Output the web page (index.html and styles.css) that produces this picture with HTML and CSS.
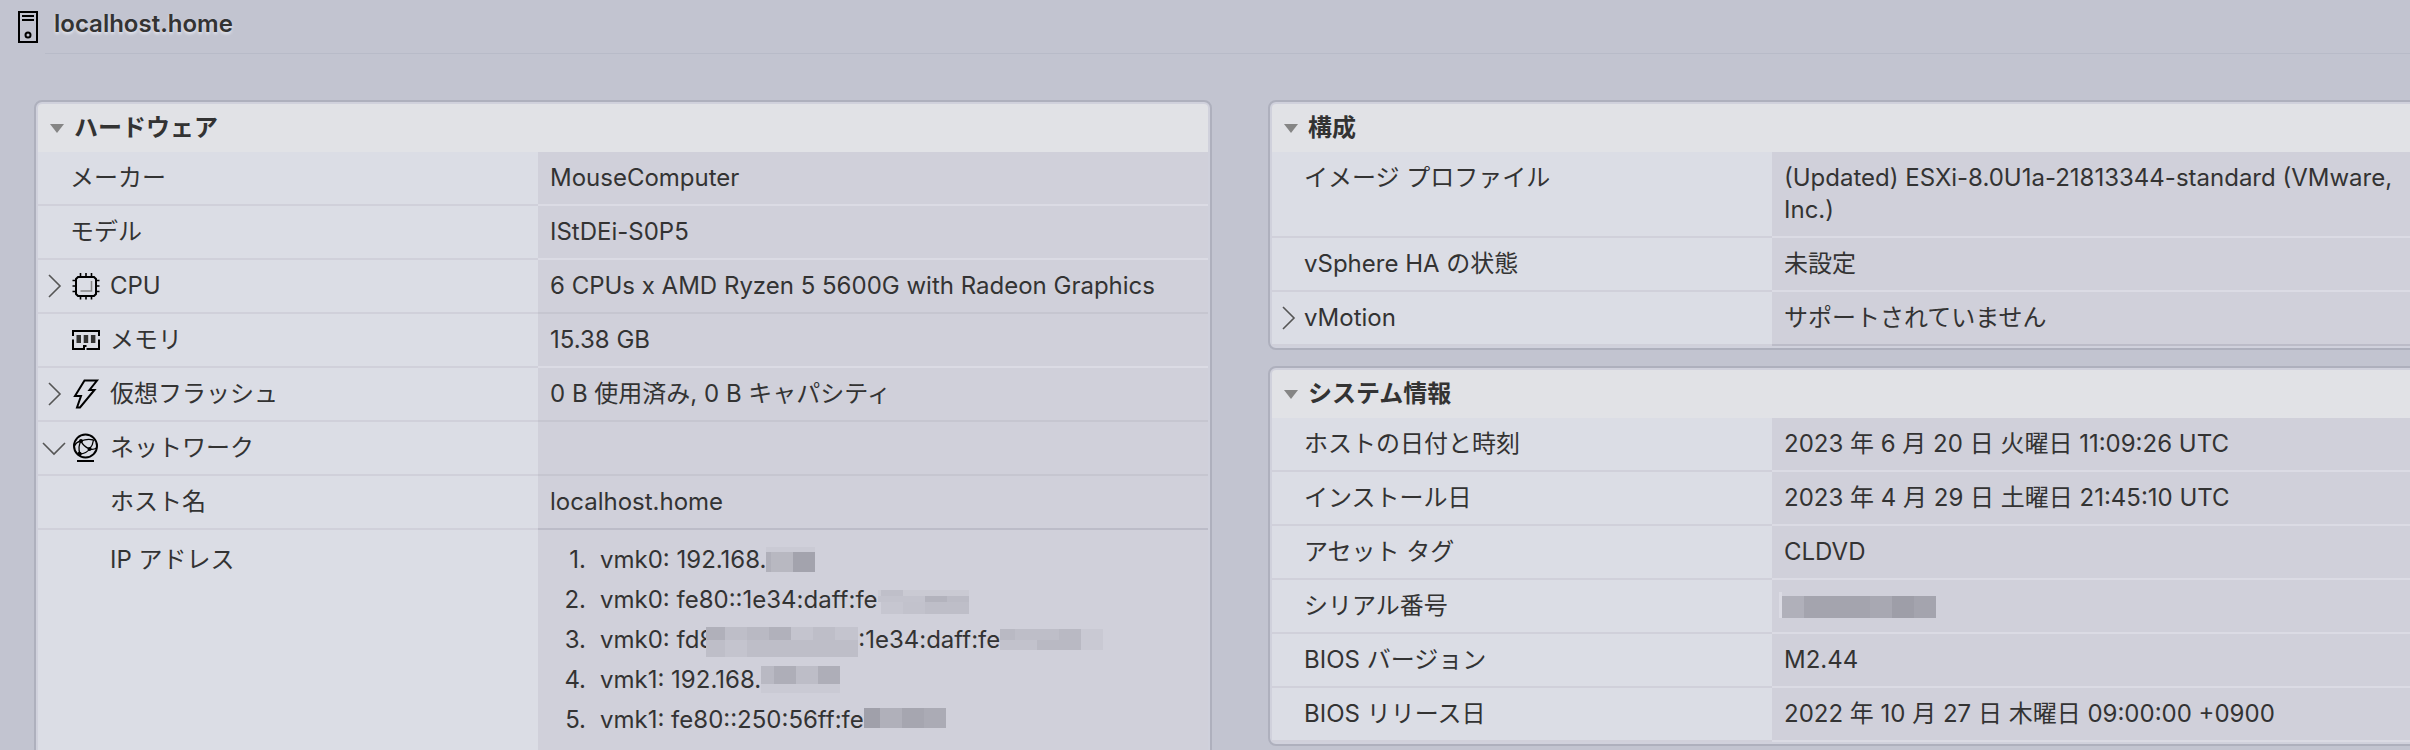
FILE: index.html
```html
<!DOCTYPE html>
<html lang="ja">
<head>
<meta charset="utf-8">
<title>localhost.home</title>
<link rel="stylesheet" href="styles.css">
</head>
<body>
<div class="app">
  <header class="host-bar">
    <svg class="host-icon" width="20" height="32" viewBox="0 0 20 32" fill="none" stroke="#000" stroke-width="2"><path d="M1 1h18v30H1z"/><path d="M4 5h12M4 9h12"/><circle cx="10" cy="24" r="2.5"/></svg>
    <h1 class="host-name">localhost.home</h1>
  </header>

  <main class="columns">
    <div class="column">
      <section class="panel">
        <button class="panel-title" type="button" aria-expanded="true"><span class="caret"></span>ハードウェア</button>
        <table class="props">
          <tr><th scope="row"><div class="label"><span class="twisty"></span>メーカー</div></th><td>MouseComputer</td></tr>
          <tr><th scope="row"><div class="label"><span class="twisty"></span>モデル</div></th><td>IStDEi-S0P5</td></tr>
          <tr class="mid"><th scope="row"><div class="label">
            <button class="twisty" type="button" aria-label="CPU を展開"><svg class="chevron" viewBox="0 0 32 32"><path d="M11 5l11 11-11 11"/></svg></button>
            <svg class="icon" viewBox="0 0 32 32"><path d="M8 7h16l2 2v15l-2 2H8l-2-2V9z"/><path class="pins" d="M10.500 3v4M16 3v4M21.500 3v4M10.500 26v3.500M16 26v3.500M21.500 26v3.500M2.500 10.500H6M2.500 16H6M2.500 21.500H6M26 10.500h3.500M26 16h3.500M26 21.500h3.500"/><path class="faint" d="M10.500 21H21.500V11"/></svg>CPU</div></th><td>6 CPUs x AMD Ryzen 5 5600G with Radeon Graphics</td></tr>
          <tr><th scope="row"><div class="label"><span class="twisty"></span>
            <svg class="icon" viewBox="0 0 32 32"><path d="M3 12V7h26v5M3 15.500V25h11v-3h2.500M16.500 25H29v-9.500"/><path class="chips" d="M6.500 11h4.500v8H6.500zM13.700 11h4.500v8h-4.500zM20.900 11h4.500v8h-4.500z"/></svg>メモリ</div></th><td>15.38 GB</td></tr>
          <tr class="mid"><th scope="row"><div class="label">
            <button class="twisty" type="button" aria-label="仮想フラッシュを展開"><svg class="chevron" viewBox="0 0 32 32"><path d="M11 5l11 11-11 11"/></svg></button>
            <svg class="icon" viewBox="0 0 32 32"><path d="M14.500 2.500H27L19.500 12H24.500L10 29.500H7L11 18H5z"/></svg>仮想フラッシュ</div></th><td>0 B 使用済み, 0 B キャパシティ</td></tr>
          <tr class="mid"><th scope="row"><div class="label">
            <button class="twisty" type="button" aria-label="ネットワークを折りたたむ" aria-expanded="true"><svg class="chevron" viewBox="0 0 32 32"><path d="M5 11l11 11 11-11"/></svg></button>
            <svg class="icon" viewBox="0 0 32 32"><circle cx="15.500" cy="14" r="11.500"/><path d="M7 29h17"/><path class="thin" d="M11 9Q17 6.500 23.500 8M11 9q-5 1-6.500 5M11 9q2 5 8.500 8M11 9Q7.500 15 10 22M19.500 17q3.500-4 4-9M19.500 17q4 1 7-1M19.500 17q-3 4.500-9.500 5"/><circle class="node" cx="11" cy="9" r="2"/><circle class="node" cx="19.500" cy="17" r="2"/><circle class="node" cx="9.500" cy="22" r="2.200"/></svg>ネットワーク</div></th><td></td></tr>
          <tr class="end"><th scope="row"><div class="label sub">ホスト名</div></th><td>localhost.home</td></tr>
          <tr class="tall"><th scope="row"><div class="label sub">IP アドレス</div></th><td>
            <ol class="addresses">
              <li>vmk0: 192.168.<svg class="mask" width="49" height="32"><path fill="#cacad4" d="M0 3h49v5H0z"/><path fill="#b8b8c1" d="M0 8h27v20H0z"/><path fill="#b0b0ba" d="M0 8h5v20H0z"/><path fill="#a3a3ad" d="M27 8h22v20H27z"/></svg></li>
              <li>vmk0: fe80::1e34:daff:fe<svg class="mask" width="91" height="32"><path fill="#cacad3" d="M0 6h91v6H0z"/><path fill="#bfbfc9" d="M3 6h22v6H3z"/><path fill="#c3c3cd" d="M0 12h47v6H0z"/><path fill="#b3b3bd" d="M47 12h22v6H47z"/><path fill="#bbbbc5" d="M69 12h22v6H69z"/><path fill="#c6c6d0" d="M3 18h22v12H3z"/><path fill="#c2c2cc" d="M25 18h22v12H25z"/><path fill="#bebec8" d="M47 18h44v12H47z"/></svg></li>
              <li>vmk0: fd8<svg class="mask over" width="152" height="33"><path fill="#bebec8" d="M0 3h152v30H0z"/><path fill="#b0b0ba" d="M0 3h19v13H0z"/><path fill="#b9b9c3" d="M41 3h22v13H41z"/><path fill="#b1b1bb" d="M63 3h22v13H63z"/><path fill="#c4c4ce" d="M85 3h22v13H85zM129 3h23v13h-23zM19 16h22v17H19z"/></svg>:1e34:daff:fe<svg class="mask" width="103" height="32"><path fill="#c2c2cc" d="M0 5h103v21H0z"/><path fill="#b9b9c3" d="M0 5h15v11H0zM37 16h22v10H37zM59 5h22v21H59z"/><path fill="#bebec8" d="M15 5h44v11H15z"/><path fill="#c9c9d3" d="M81 5h22v21H81z"/></svg></li>
              <li>vmk1: 192.168.<svg class="mask" width="79" height="32"><path fill="#b9b9c3" d="M0 2h13v18H0z"/><path fill="#aeaeb8" d="M13 2h22v18H13zM57 2h22v18H57z"/><path fill="#bdbdc7" d="M35 2h22v18H35z"/><path fill="#cacad4" d="M0 20h79v9H0z"/></svg></li>
              <li>vmk1: fe80::250:56ff:fe<svg class="mask" width="82" height="32"><path fill="#a0a0aa" d="M0 4h16v20H0z"/><path fill="#b0b0ba" d="M16 4h22v20H16z"/><path fill="#a6a6b0" d="M38 4h22v20H38z"/><path fill="#ababb5" d="M60 4h22v20H60z"/></svg></li>
            </ol></td></tr>
        </table>
      </section>
    </div>

    <div class="column">
      <section class="panel">
        <button class="panel-title" type="button" aria-expanded="true"><span class="caret"></span>構成</button>
        <table class="props">
          <tr><th scope="row"><div class="label"><span class="twisty"></span>イメージ プロファイル</div></th><td>(Updated) ESXi-8.0U1a-21813344-standard (VMware, Inc.)</td></tr>
          <tr><th scope="row"><div class="label"><span class="twisty"></span>vSphere HA の状態</div></th><td>未設定</td></tr>
          <tr class="end"><th scope="row"><div class="label"><button class="twisty" type="button" aria-label="vMotion を展開"><svg class="chevron" viewBox="0 0 32 32"><path d="M11 5l11 11-11 11"/></svg></button>vMotion</div></th><td>サポートされていません</td></tr>
        </table>
      </section>

      <section class="panel">
        <button class="panel-title" type="button" aria-expanded="true"><span class="caret"></span>システム情報</button>
        <table class="props">
          <tr><th scope="row"><div class="label"><span class="twisty"></span>ホストの日付と時刻</div></th><td>2023 年 6 月 20 日 火曜日 11:09:26 UTC</td></tr>
          <tr><th scope="row"><div class="label"><span class="twisty"></span>インストール日</div></th><td>2023 年 4 月 29 日 土曜日 21:45:10 UTC</td></tr>
          <tr><th scope="row"><div class="label"><span class="twisty"></span>アセット タグ</div></th><td>CLDVD</td></tr>
          <tr><th scope="row"><div class="label"><span class="twisty"></span>シリアル番号</div></th><td><svg class="mask serial" width="157" height="32"><path fill="#dbdbe4" d="M0 2h3v26H0z"/><path fill="#b0b0ba" d="M3 6h22v22H3z"/><path fill="#a4a4ae" d="M25 6h66v22H25zM135 6h22v22h-22z"/><path fill="#a8a8b2" d="M91 6h22v22H91z"/><path fill="#9e9ea8" d="M113 6h22v22h-22z"/></svg></td></tr>
          <tr><th scope="row"><div class="label"><span class="twisty"></span>BIOS バージョン</div></th><td>M2.44</td></tr>
          <tr><th scope="row"><div class="label"><span class="twisty"></span>BIOS リリース日</div></th><td>2022 年 10 月 27 日 木曜日 09:00:00 +0900</td></tr>
        </table>
      </section>
    </div>
  </main>
</div>
</body>
</html>
```
FILE: styles.css
```css
* { box-sizing: border-box; }

body {
  margin: 0;
  background: #c2c4d0;
  color: #333;
  font: 24px/32px Inter, "Noto Sans CJK JP", sans-serif;
}

button {
  padding: 0;
  border: 0;
  background: none;
  color: inherit;
  font: inherit;
  text-align: left;
}

.app {
  height: 100vh;
  overflow: hidden;
}

.host-bar {
  display: flex;
  align-items: center;
  gap: 16px;
  height: 54px;
  padding-left: 18px;
  background: linear-gradient(#b8bbc8, #b8bbc8) 45px 100% / 100% 1px no-repeat;
}

.host-icon { display: block; }

.host-name {
  margin: 0;
  padding-bottom: 6px;
  font-size: 24px;
  font-weight: 600;
  text-shadow: 0 2px 3px #e6e8f0;
}

/* The right column runs on past the edge of the view. */
.columns {
  display: grid;
  grid-template-columns: 1fr 1fr;
  align-items: start;
  gap: 56px;
  margin: 46px -36px 0 34px;
}

.column {
  display: grid;
  gap: 16px;
}

.panel {
  padding: 2px;
  border: 2px solid #aeb0bd;
  border-radius: 8px;
  background: #d0d1dc;
}

.panel-title {
  display: flex;
  align-items: center;
  width: 100%;
  height: 48px;
  padding-left: 12px;
  gap: 10px;
  border-radius: 4px 4px 0 0;
  background: #e1e2e6;
  font-weight: 600;
}

.caret {
  border: 7px solid transparent;
  border-top: 9px solid #858585;
  border-bottom: 0;
}

.props {
  width: 100%;
  border-collapse: separate;
  border-spacing: 0;
  table-layout: fixed;
}

.props th,
.props td {
  padding: 10px 12px;
  vertical-align: top;
  font-weight: 400;
  text-align: left;
}

.props th {
  width: 500px;
  padding-left: 0;
  border-bottom: 2px solid #d0d0da;
  background: #dbdde5;
}

.props td {
  border-bottom: 2px solid #dbdbe4;
  background: #d0d0da;
}

.props .mid td { border-bottom-color: #c6c6d0; }
.props .end td { border-bottom-color: #bcbcc8; }

.props .tall th,
.props .tall td {
  padding-top: 14px;
  padding-bottom: 48px;
}

.label { display: flex; }
.label.sub { padding-left: 72px; }

.twisty {
  flex: none;
  width: 32px;
  height: 32px;
}

.chevron,
.icon {
  display: block;
  flex: none;
  width: 32px;
  height: 32px;
  fill: none;
}

.chevron {
  stroke: #555;
  stroke-width: 1.6;
}

.icon {
  margin-right: 8px;
  stroke: #000;
  stroke-width: 2;
}

.icon .faint { stroke: #858585; stroke-width: 1.5; }
.icon .pins { stroke-width: 1.6; }
.icon .thin { stroke-width: 1.3; }
.icon .chips { fill: #333; stroke: none; }
.icon .node { fill: #000; stroke: none; }

.addresses {
  display: grid;
  gap: 8px;
  margin: 0;
  padding: 0;
  list-style: none;
  counter-reset: address;
}

.addresses li {
  display: flex;
  height: 32px;
  counter-increment: address;
}

.addresses li::before {
  content: counter(address) ".";
  flex: none;
  width: 36px;
  margin-right: 14px;
  text-align: right;
}

.mask {
  display: block;
  flex: none;
}

.mask.over { margin-left: -8px; }
.mask.serial { margin-left: -5px; }
```
